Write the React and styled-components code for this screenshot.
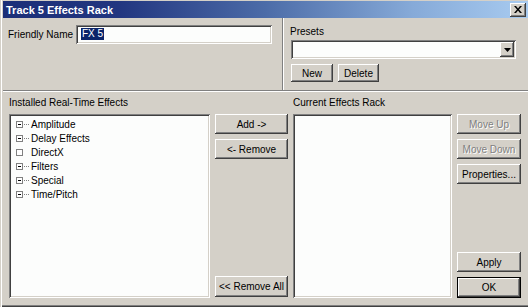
import styled, { createGlobalStyle, css } from "styled-components";

const GlobalStyle = createGlobalStyle`
  html, body {
    margin: 0;
    padding: 0;
    background: #d4d0c8;
    overflow: hidden;
  }
`;

const face = "#d4d0c8";
const font = `"Liberation Sans", Arial, sans-serif`;

const Window = styled.div`
  box-sizing: border-box;
  width: 528px;
  height: 307px;
  padding: 1px 0 2px 2px;
  border-left: 1px solid ${face};
  background: ${face};
  box-shadow: inset 1px 0 #fff, inset 0 -1px #404040, inset 0 -2px #808080;
  display: flex;
  flex-direction: column;
  font: 10px ${font};
  color: #000;
`;

const TitleBar = styled.div`
  height: 17px;
  display: flex;
  align-items: center;
  justify-content: space-between;
  padding: 0 2px 0 3px;
  background: linear-gradient(to right, #1b2f78 0%, #223680 22%, #4c6ca8 50%, #86aad8 78%, #a8cbf0 100%);
  color: #fff;
  font: bold 11px ${font};
`;

const CloseButton = styled.div`
  width: 16px;
  height: 14px;
  display: flex;
  align-items: center;
  justify-content: center;
  background: ${face};
  box-shadow: inset -1px -1px #404040, inset 1px 1px #fff, inset -2px -2px #808080;
`;

const TopSection = styled.div`
  height: 72px;
  display: flex;
  border-bottom: 1px solid #808080;
`;

const NamePane = styled.div`
  width: 280px;
  border-right: 1px solid #808080;
  display: flex;
  align-items: flex-start;
  padding: 7px 0 0 5px;
  box-sizing: border-box;
`;

const PresetPane = styled.div`
  flex: 1;
  border-left: 1px solid #fff;
  padding: 8px 0 0 6px;
  display: flex;
  flex-direction: column;
`;

const FieldLabel = styled.div`
  width: ${(p) => (p.$w ? `${p.$w}px` : "auto")};
  line-height: ${(p) => (p.$lh ? `${p.$lh}px` : "12px")};
  white-space: nowrap;
  flex: none;
`;

const sunken = css`
  box-sizing: border-box;
  background: #fcfdfc;
  box-shadow: inset 1px 1px #808080, inset -1px -1px #fff, inset 2px 2px #404040, inset -2px -2px ${face};
`;

const TextField = styled.div`
  ${sunken};
  width: 196px;
  height: 19px;
  padding: 3px 0 0 5px;
`;

const Selected = styled.span`
  display: inline-block;
  background: #0a246a;
  color: #fff;
  line-height: 12px;
  padding: 0 1px;
`;

const Combo = styled.div`
  ${sunken};
  width: 225px;
  height: 19px;
  margin: 2px 0 0 1px;
  padding: 2px;
  display: flex;
  justify-content: flex-end;
`;

const ComboArrow = styled.div`
  width: 14px;
  height: 15px;
  display: flex;
  align-items: center;
  justify-content: center;
  background: ${face};
  box-shadow: inset -1px -1px #404040, inset 1px 1px #fff, inset -2px -2px #808080;
`;

const ButtonRow = styled.div`
  display: flex;
  gap: 5px;
  margin: 5px 0 0 1px;
`;

const Button = styled.div`
  box-sizing: border-box;
  width: ${(p) => (p.$w ? `${p.$w}px` : "100%")};
  height: ${(p) => p.$h || 20}px;
  margin-bottom: ${(p) => p.$mb || 0}px;
  flex: none;
  display: flex;
  align-items: center;
  justify-content: center;
  white-space: nowrap;
  background: ${face};
  color: ${(p) => (p.$disabled ? "#808080" : "#000")};
  text-shadow: ${(p) => (p.$disabled ? "1px 1px #fff" : "none")};
  box-shadow: ${(p) =>
    p.$default
      ? "inset 0 0 0 1px #000, inset -2px -2px #404040, inset 2px 2px #fff, inset -3px -3px #808080"
      : "inset -1px -1px #404040, inset 1px 1px #fff, inset -2px -2px #808080"};
`;

const BottomSection = styled.div`
  flex: 1;
  border-top: 1px solid #fff;
  padding: 5px 0 0 6px;
  display: grid;
  grid-template-columns: 201px 73px 159px 64px;
  grid-template-rows: 17px 184px;
  column-gap: 5px;
`;

const SectionLabel = styled.div`
  grid-column: ${(p) => p.$col};
  grid-row: 1;
  line-height: 12px;
  white-space: nowrap;
`;

const ListBox = styled.div`
  ${sunken};
  grid-column: ${(p) => p.$col};
  grid-row: 2;
  padding: 3px 0 0 7px;
`;

const ButtonColumn = styled.div`
  grid-column: ${(p) => p.$col};
  grid-row: 2;
  display: flex;
  flex-direction: column;
  gap: 5px;
`;

const Spacer = styled.div`
  flex: 1;
`;

const TreeRow = styled.div`
  height: 14px;
  display: flex;
  align-items: center;
`;

const Expander = styled.div`
  box-sizing: border-box;
  width: 7px;
  height: 7px;
  border: 1px solid #808080;
  background: #fff;
  position: relative;
  flex: none;
  ${(p) =>
    p.$minus &&
    css`
      &::after {
        content: "";
        position: absolute;
        left: 1px;
        top: 2px;
        width: 3px;
        height: 1px;
        background: #000;
      }
    `}
`;

const Dots = styled.div`
  width: 5px;
  height: 1px;
  margin: 0 2px 0 1px;
  background: ${(p) =>
    p.$hidden ? "transparent" : "repeating-linear-gradient(to right, #808080 0 1px, transparent 1px 2px)"};
  flex: none;
`;

const effects = [
  { name: "Amplitude", open: true },
  { name: "Delay Effects", open: true },
  { name: "DirectX", open: false },
  { name: "Filters", open: true },
  { name: "Special", open: true },
  { name: "Time/Pitch", open: true },
];

export default function App() {
  return (
    <>
      <GlobalStyle />
      <Window>
        <TitleBar>
          <span>Track 5 Effects Rack</span>
          <CloseButton>
            <svg width="8" height="7" viewBox="0 0 8 7">
              <path d="M0 0h2l2 2.5L6 0h2L5 3.5 8 7H6L4 4.5 2 7H0l3-3.5z" fill="#000" />
            </svg>
          </CloseButton>
        </TitleBar>

        <TopSection>
          <NamePane>
            <FieldLabel $w={68} $lh={19}>Friendly Name</FieldLabel>
            <TextField>
              <Selected>FX 5</Selected>
            </TextField>
          </NamePane>
          <PresetPane>
            <FieldLabel>Presets</FieldLabel>
            <Combo>
              <ComboArrow>
                <svg width="7" height="4" viewBox="0 0 7 4">
                  <path d="M0 0h7L3.5 4z" fill="#000" />
                </svg>
              </ComboArrow>
            </Combo>
            <ButtonRow>
              <Button $w={42} $h={18}>New</Button>
              <Button $w={41} $h={18}>Delete</Button>
            </ButtonRow>
          </PresetPane>
        </TopSection>

        <BottomSection>
          <SectionLabel $col={1}>Installed Real-Time Effects</SectionLabel>
          <ListBox $col={1}>
            {effects.map((fx) => (
              <TreeRow key={fx.name}>
                <Expander $minus={fx.open} />
                <Dots $hidden={!fx.open} />
                <span>{fx.name}</span>
              </TreeRow>
            ))}
          </ListBox>

          <ButtonColumn $col={2}>
            <Button>Add -&gt;</Button>
            <Button>&lt;- Remove</Button>
            <Spacer />
            <Button $h={21} $mb={1}>&lt;&lt; Remove All</Button>
          </ButtonColumn>

          <SectionLabel $col={3}>Current Effects Rack</SectionLabel>
          <ListBox $col={3} />

          <ButtonColumn $col={4}>
            <Button $disabled>Move Up</Button>
            <Button $disabled>Move Down</Button>
            <Button>Properties...</Button>
            <Spacer />
            <Button>Apply</Button>
            <Button $h={21} $default>OK</Button>
          </ButtonColumn>
        </BottomSection>
      </Window>
    </>
  );
}
